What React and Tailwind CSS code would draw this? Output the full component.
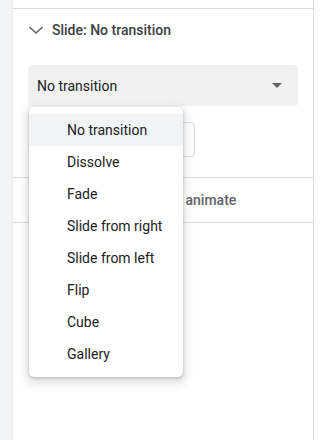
const items = [
  "No transition",
  "Dissolve",
  "Fade",
  "Slide from right",
  "Slide from left",
  "Flip",
  "Cube",
  "Gallery",
];

export default function App() {
  return (
    <div className="flex w-[327px] h-[440px] bg-white overflow-hidden font-['Roboto',_'Liberation_Sans',_sans-serif]">
      <div className="w-[13px] shrink-0 bg-[#f3f4f5] border-r border-[#e8eaed]" />
      <div className="relative w-[301px] shrink-0 flex flex-col border-r border-[#dadce0]">
        <div className="h-[9px] shrink-0 border-b border-[#dadce0]" />
        <div className="flex items-center h-[42px] pl-[15px] gap-[8px] text-[#3c4043]">
          <svg width="16" height="16" viewBox="0 0 16 16" className="text-[#5f6368]">
            <path d="M1.5 5 L8 11 L14.5 5" fill="none" stroke="currentColor" strokeWidth="1.6" />
          </svg>
          <span className="text-[14px] font-medium">Slide: No transition</span>
        </div>
        <div className="pt-[14px] px-[15px]">
          <div className="flex items-center justify-between h-[41px] rounded-[4px] bg-[#f1f1f1] pl-[9px] pr-[16px]">
            <span className="text-[14px] text-[#202124] pt-[1px]">No transition</span>
            <svg width="10" height="5" viewBox="0 0 10 5">
              <path d="M0 0 L10 0 L5 5 Z" fill="#5f6368" />
            </svg>
          </div>
        </div>
        <div className="flex pt-[16px] pb-[20px] pl-[120px]">
          <div className="w-[62px] h-[35px] rounded-[4px] border border-[#dadce0]" />
        </div>
        <div className="flex items-center h-[46px] border-t border-b border-[#dadce0] pl-[53px]">
          <span className="text-[14px] font-medium text-[#5f6368] pt-[1px]">Select an object to animate</span>
        </div>
        <div className="absolute left-[16px] top-[107px] w-[154px] bg-white rounded-[5px] shadow-[0_1px_3px_rgba(60,64,67,0.3),0_4px_8px_3px_rgba(60,64,67,0.15)] py-[7px]">
          {items.map((item, i) => (
            <div
              key={item}
              className={
                "flex items-center h-[32px] pl-[38px] pt-[1px] text-[14px] text-[#202124] " +
                (i === 0 ? "bg-[#f1f3f4]" : "")
              }
            >
              {item}
            </div>
          ))}
        </div>
      </div>
      <div className="flex-1" />
    </div>
  );
}
